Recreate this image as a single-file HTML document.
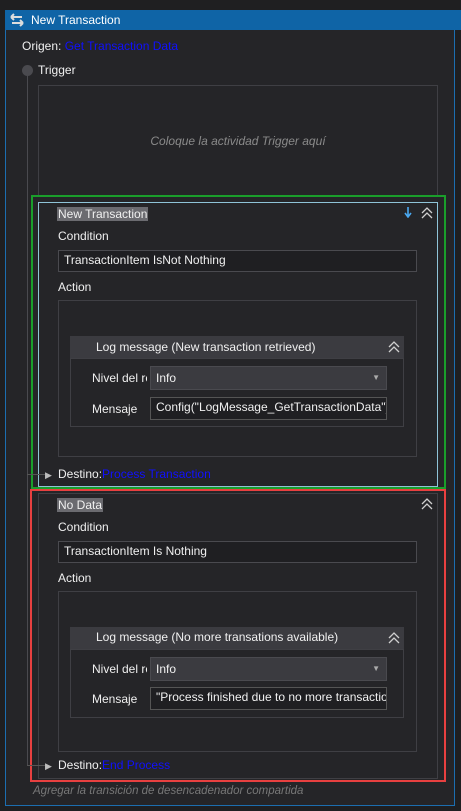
<!DOCTYPE html><html><head><style>
*{margin:0;padding:0;box-sizing:border-box}
body{width:461px;height:811px;background:#1f1f21;font-family:"Liberation Sans",sans-serif;font-size:12px;color:#f0f0f0;position:relative;overflow:hidden}
.a{position:absolute}
.frame{left:5px;top:10px;width:450px;height:796px;border:1px solid #1c6eb0;background:#252528}
.hdr{left:5px;top:10px;width:456px;height:20px;background:#0f64a6;color:#fff}
.lbl{white-space:nowrap}
.box{border:1px solid #3f3f44}
.inp{border:1px solid #4a4a4f;background:#1f1f22;padding-left:5px;line-height:19px;white-space:nowrap;overflow:hidden}
.hl{background:#6b6b70;padding:0 1px;line-height:14px}
.blue{color:#1010ff}
</style></head><body>
<svg width="0" height="0" style="position:absolute"><defs><symbol id="cv" viewBox="0 0 12 12"><path d="M1 6l5-5 5 5M1 11l5-5 5 5" stroke="#d0d0d0" stroke-width="1.3" fill="none"/></symbol></defs></svg>
<div class="a frame"></div>
<div class="a hdr"><svg class="a" style="left:4px;top:3px" width="16" height="14" viewBox="0 0 16 14"><path d="M2 4h11M2 4l3-3M2 4l3 3M14 10H3M14 10l-3-3M14 10l-3 3" stroke="#ddd" stroke-width="2" fill="none"/></svg><span class="a lbl" style="left:26px;top:3px">New Transaction</span></div>
<div class="a lbl" style="left:22px;top:39px">Origen: <span class="blue">Get Transaction Data</span></div>
<div class="a" style="left:22px;top:65px;width:11px;height:11px;border-radius:50%;background:#4a4a4f"></div>
<div class="a" style="left:27px;top:76px;width:1px;height:690px;background:#4a4a4f"></div>
<div class="a lbl" style="left:38px;top:63px">Trigger</div>
<div class="a box" style="left:38px;top:85px;width:400px;height:112px"></div>
<div class="a lbl" style="left:38px;top:134px;width:400px;text-align:center;color:#8a8a8a;font-style:italic">Coloque la actividad Trigger aquí</div>

<div class="a" style="left:31px;top:195px;width:415px;height:294px;border:2px solid #1a9e2b"></div>
<div class="a" style="left:38px;top:202px;width:400px;height:285px;border:1px solid #8fc4d8"></div>
<div class="a lbl hl" style="left:57px;top:207px">New Transaction</div>
<svg class="a" style="left:404px;top:207px" width="8" height="11" viewBox="0 0 8 11"><path d="M4 0v9M1 6l3 4 3-4" stroke="#4aa8f0" stroke-width="1.6" fill="none"/></svg>
<svg class="a" style="left:421px;top:207px" width="12" height="12"><use href="#cv"/></svg>
<div class="a lbl" style="left:58px;top:229px">Condition</div>
<div class="a inp" style="left:58px;top:250px;width:359px;height:22px">TransactionItem IsNot Nothing</div>
<div class="a lbl" style="left:58px;top:280px">Action</div>
<div class="a box" style="left:58px;top:300px;width:359px;height:157px"></div>
<div class="a" style="left:70px;top:336px;width:334px;height:22px;background:#3b3b40"></div>
<div class="a lbl" style="left:96px;top:340px">Log message (New transaction retrieved)</div>
<svg class="a" style="left:388px;top:341px" width="12" height="12"><use href="#cv"/></svg>
<div class="a box" style="left:70px;top:358px;width:334px;height:69px"></div>
<div class="a lbl" style="left:92px;top:371px;width:55px;overflow:hidden">Nivel del registro</div>
<div class="a inp" style="left:150px;top:366px;width:237px;height:24px;background:#3b3b40;line-height:22px">Info<span class="a" style="right:6px;top:0;font-size:8px;color:#aaa">▼</span></div>
<div class="a lbl" style="left:92px;top:402px">Mensaje</div>
<div class="a inp" style="left:150px;top:397px;width:237px;height:23px;border-color:#555">Config("LogMessage_GetTransactionData")</div>
<div class="a" style="left:27px;top:474px;width:19px;height:1px;background:#555"></div>
<div class="a" style="left:45px;top:470px;color:#bbb;font-size:9px">▶</div>
<div class="a lbl" style="left:58px;top:467px">Destino:<span class="blue">Process Transaction</span></div>

<div class="a" style="left:30px;top:489px;width:416px;height:293px;border:2px solid #e84040"></div>
<div class="a" style="left:38px;top:493px;width:400px;height:286px;border:1px solid #3f3f44"></div>
<div class="a lbl hl" style="left:57px;top:498px">No Data</div>
<svg class="a" style="left:421px;top:498px" width="12" height="12"><use href="#cv"/></svg>
<div class="a lbl" style="left:58px;top:520px">Condition</div>
<div class="a inp" style="left:58px;top:541px;width:359px;height:22px">TransactionItem Is Nothing</div>
<div class="a lbl" style="left:58px;top:571px">Action</div>
<div class="a box" style="left:58px;top:591px;width:359px;height:161px"></div>
<div class="a" style="left:70px;top:627px;width:334px;height:22px;background:#3b3b40"></div>
<div class="a lbl" style="left:96px;top:630px">Log message (No more transations available)</div>
<svg class="a" style="left:388px;top:632px" width="12" height="12"><use href="#cv"/></svg>
<div class="a box" style="left:70px;top:649px;width:334px;height:69px"></div>
<div class="a lbl" style="left:92px;top:662px;width:55px;overflow:hidden">Nivel del registro</div>
<div class="a inp" style="left:150px;top:657px;width:237px;height:24px;background:#3b3b40;line-height:22px">Info<span class="a" style="right:6px;top:0;font-size:8px;color:#aaa">▼</span></div>
<div class="a lbl" style="left:92px;top:692px">Mensaje</div>
<div class="a inp" style="left:150px;top:687px;width:237px;height:23px;border-color:#555">"Process finished due to no more transactions"</div>
<div class="a" style="left:27px;top:765px;width:19px;height:1px;background:#555"></div>
<div class="a" style="left:45px;top:761px;color:#bbb;font-size:9px">▶</div>
<div class="a lbl" style="left:58px;top:758px">Destino:<span class="blue">End Process</span></div>
<div class="a lbl" style="left:33px;top:785px;color:#777;font-style:italic;font-size:11.5px">Agregar la transición de desencadenador compartida</div>
</body></html>
